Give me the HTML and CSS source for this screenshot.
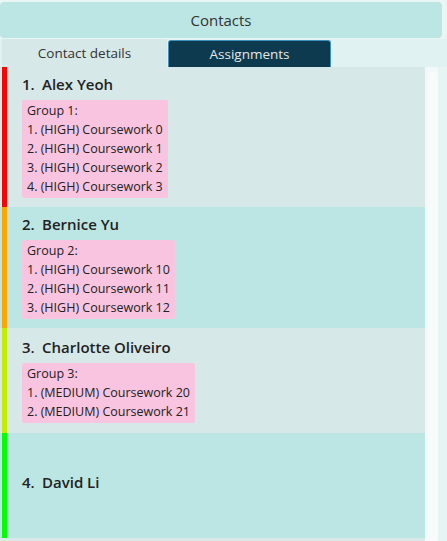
FILE: index.html
```html
<!DOCTYPE html>
<html>
<head>
<meta charset="utf-8">
<link rel="stylesheet" href="styles.css">
</head>
<body>
<div class="app">
  <div class="header">Contacts</div>
  <div class="tabs">
    <div class="tab">Contact details</div>
    <div class="tab active">Assignments</div>
  </div>
  <div class="main">
    <div class="list">
      <div class="item odd">
        <div class="bar red"></div>
        <div class="content">
          <div class="name"><span class="idx">1.</span>Alex Yeoh</div>
          <div class="box">
            <div>Group 1:</div>
            <div>1. (HIGH) Coursework 0</div>
            <div>2. (HIGH) Coursework 1</div>
            <div>3. (HIGH) Coursework 2</div>
            <div>4. (HIGH) Coursework 3</div>
          </div>
        </div>
      </div>
      <div class="item even">
        <div class="bar orange"></div>
        <div class="content">
          <div class="name"><span class="idx">2.</span>Bernice Yu</div>
          <div class="box">
            <div>Group 2:</div>
            <div>1. (HIGH) Coursework 10</div>
            <div>2. (HIGH) Coursework 11</div>
            <div>3. (HIGH) Coursework 12</div>
          </div>
        </div>
      </div>
      <div class="item odd">
        <div class="bar lime"></div>
        <div class="content">
          <div class="name"><span class="idx">3.</span>Charlotte Oliveiro</div>
          <div class="box">
            <div>Group 3:</div>
            <div>1. (MEDIUM) Coursework 20</div>
            <div>2. (MEDIUM) Coursework 21</div>
          </div>
        </div>
      </div>
      <div class="item even tall">
        <div class="bar green"></div>
        <div class="content">
          <div class="name"><span class="idx">4.</span>David Li</div>
        </div>
      </div>
    </div>
    <div class="scroll">
      <div class="track"><div class="thumb"></div></div>
      <div class="edge"></div>
    </div>
  </div>
</div>
</body>
</html>
```
FILE: styles.css
```css
html, body {
  margin: 0;
  padding: 0;
  height: 100%;
}
body {
  background: #eaf6f6;
  font-family: "Open Sans", "Noto Sans", sans-serif;
  color: #222;
  overflow: hidden;
}
.app {
  display: flex;
  flex-direction: column;
  height: 541px;
}
.header {
  margin: 2px 5px 0 0;
  height: 36px;
  background: #bce6e3;
  border-radius: 4px;
  display: flex;
  align-items: center;
  justify-content: center;
  font-size: 15px;
  color: #333;
}
.tabs {
  display: flex;
  height: 28px;
  background: #e0f2f1;
  margin-top: 1px;
  padding-left: 2px;
}
.tab {
  width: 165px;
  display: flex;
  align-items: center;
  justify-content: center;
  font-size: 13.5px;
  color: #333;
  background: #d7e8e8;
}
.tab.active {
  width: 161px;
  margin-left: 1px;
  margin-top: 1px;
  background: #0d3a4f;
  color: #e6e6e6;
  border: 1px solid #3b93bd;
  border-bottom: none;
  border-radius: 3px 3px 0 0;
}
.main {
  flex: 1;
  display: flex;
  min-height: 0;
}
.list {
  width: 425px;
  display: flex;
  flex-direction: column;
  background: #d9e8e8;
}
.item {
  display: flex;
  min-height: 105px;
}
.item.odd { background: #d7e8e8; }
.item.even { background: #bce6e3; }
.bar {
  width: 5px;
  margin-left: 2px;
  flex: none;
}
.red { background: #ff0000; }
.orange { background: #ffa500; }
.lime { background: #c6ec00; }
.green { background: #00ff00; }
.content {
  padding: 7px 0 9px 15px;
  display: flex;
  flex-direction: column;
  justify-content: center;
}
.item.tall { height: 105px; min-height: 0; }
.item.tall .content { padding-bottom: 14px; }
.name {
  font-size: 15px;
  font-weight: 600;
  line-height: 20px;
  color: #222;
}
.idx {
  display: inline-block;
  width: 20px;
}
.box {
  align-self: flex-start;
  margin-top: 6px;
  background: #f9c4df;
  border-radius: 2px;
  padding: 1px 5px 2px 5px;
  font-size: 12.5px;
  line-height: 19px;
  color: #222;
}
.scroll {
  flex: 1;
  display: flex;
}
.track {
  width: 13px;
  background: #f3f9fa;
  padding: 5px 0 0 3px;
  box-sizing: border-box;
}
.thumb {
  width: 10px;
  height: 470px;
  background: #f8fbfc;
  border-radius: 4px;
}
.edge {
  flex: 1;
  background: #e6f4f4;
}
```
